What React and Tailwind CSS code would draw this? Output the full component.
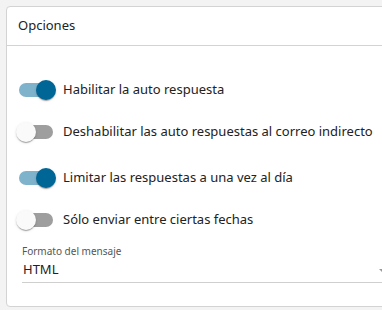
import React from "react";

const Switch = ({ on }) => (
  <span className="relative block w-[58px] h-[38px] shrink-0">
    <span
      className={`absolute left-[12px] top-[12px] w-[34px] h-[14px] rounded-full ${
        on ? "bg-[#7fb3cb]" : "bg-[#9e9e9e]"
      }`}
    />
    <span
      className={`absolute top-[9px] w-[20px] h-[20px] rounded-full shadow-[0_2px_1px_-1px_rgba(0,0,0,0.2),0_1px_1px_0_rgba(0,0,0,0.14),0_1px_3px_0_rgba(0,0,0,0.12)] ${
        on ? "left-[29px] bg-[#006696]" : "left-[9px] bg-[#fafafa]"
      }`}
    />
  </span>
);

const Row = ({ on, label, className }) => (
  <div className={`flex items-center h-[38px] ${className}`}>
    <Switch on={on} />
    <span className="-ml-[2px] text-[13px] text-[#222]">{label}</span>
  </div>
);

export default function App() {
  return (
    <div
      className="w-[382px] h-[310px] overflow-hidden bg-[#f3f3f3] pt-[6px] pl-[6px]"
      style={{ fontFamily: '"Noto Sans", "Open Sans", sans-serif' }}
    >
      <div className="w-[420px] h-[301px] bg-white border border-[#d3d3d3] rounded-[4px]">
        <div className="h-[39px] flex items-center px-[11px] border-b border-[#d3d3d3] text-[13px] text-[#222]">
          Opciones
        </div>
        <div className="pt-[25px]">
          <Row on label="Habilitar la auto respuesta" />
          <Row label="Deshabilitar las auto respuestas al correo indirecto" className="mt-[4px]" />
          <Row on label="Limitar las respuestas a una vez al día" className="mt-[8px]" />
          <Row label="Sólo enviar entre ciertas fechas" className="mt-[4px]" />
        </div>
        <div className="mt-[5px] pl-[15px] w-[376px]">
          <div className="text-[10px] leading-[14px] text-[#555]">Formato del mensaje</div>
          <div className="flex items-center justify-between h-[25px] border-b border-[#cfcfcf]">
            <span className="pl-[1px] text-[13px] text-[#222]">HTML</span>
            <span className="w-0 h-0 border-l-[3px] border-r-[3px] border-t-[3px] border-l-transparent border-r-transparent border-t-[#999] mr-[-2px]" />
          </div>
        </div>
      </div>
    </div>
  );
}
